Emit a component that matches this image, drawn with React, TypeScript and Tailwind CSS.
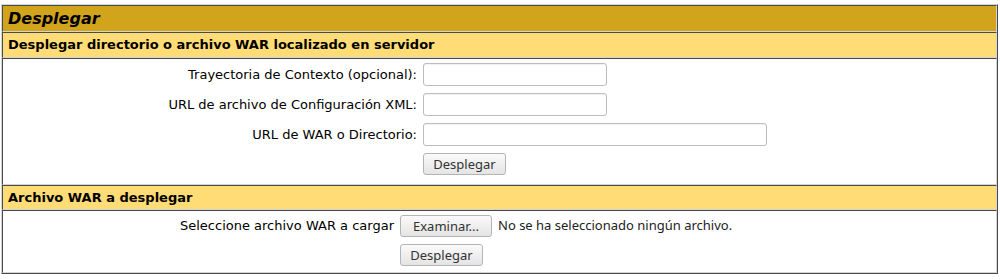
const dark = 'border-t-[#4a4a4a] border-l-[#4a4a4a] border-r-[#d4d4d4] border-b-[#d4d4d4]'

function Cell({ className, children }: { className: string; children?: React.ReactNode }) {
  return <div className={`border ${dark} ${className}`}>{children}</div>
}

function Btn({ children, w }: { children: React.ReactNode; w: string }) {
  return (
    <button
      className={`${w} h-[22px] rounded-[3px] border border-[#b4b4b4] bg-gradient-to-b from-[#fafafa] to-[#e4e4e4] text-[13px] text-[#333] font-['Noto_Sans',sans-serif] leading-none`}
    >
      {children}
    </button>
  )
}

function Field({ w }: { w: string }) {
  return (
    <input
      type="text"
      className={`${w} h-[23px] rounded-[3px] border border-[#bdbdbd] bg-white shadow-[inset_0_1px_1px_rgba(0,0,0,0.06)]`}
    />
  )
}

const rows = [
  { label: 'Trayectoria de Contexto (opcional):', w: 'w-[184px]' },
  { label: 'URL de archivo de Configuración XML:', w: 'w-[184px]' },
  { label: 'URL de WAR o Directorio:', w: 'w-[344px]' },
]

export default function App() {
  return (
    <div className="w-[1000px] h-[280px] bg-white pt-[4px] pl-[1px] font-['DejaVu_Sans',sans-serif] text-black">
      <div className="w-[997px] border border-t-[#d4d4d4] border-l-[#d4d4d4] border-r-[#4a4a4a] border-b-[#4a4a4a]">
        <Cell className="h-[27px] bg-[#d2a41c] px-[5px] flex items-center">
          <span className="text-[16px] font-bold italic">Desplegar</span>
        </Cell>
        <Cell className="h-[26px] bg-[#ffdc75] px-[5px] flex items-center">
          <span className="text-[13px] font-bold">Desplegar directorio o archivo WAR localizado en servidor</span>
        </Cell>
        <Cell className="h-[127px] bg-white pt-[4px]">
          <div className="flex flex-col gap-[7px]">
            {rows.map((r) => (
              <div key={r.label} className="flex items-center gap-[6px]">
                <div className="w-[414px] text-right text-[13px]">{r.label}</div>
                <Field w={r.w} />
              </div>
            ))}
            <div className="flex items-center gap-[6px]">
              <div className="w-[414px]" />
              <Btn w="w-[83px]">Desplegar</Btn>
            </div>
          </div>
        </Cell>
        <Cell className="h-[25px] bg-[#ffdc75] px-[5px] flex items-center">
          <span className="text-[13px] font-bold">Archivo WAR a desplegar</span>
        </Cell>
        <Cell className="h-[63px] bg-white pt-[4px]">
          <div className="flex flex-col gap-[7px]">
            <div className="flex items-center gap-[6px]">
              <div className="w-[391px] text-right text-[13px]">Seleccione archivo WAR a cargar</div>
              <Btn w="w-[92px]">Examinar...</Btn>
              <span className="text-[13px] font-['Noto_Sans',sans-serif] text-[#222]">
                No se ha seleccionado ningún archivo.
              </span>
            </div>
            <div className="flex items-center gap-[6px]">
              <div className="w-[391px]" />
              <Btn w="w-[83px]">Desplegar</Btn>
            </div>
          </div>
        </Cell>
      </div>
    </div>
  )
}
